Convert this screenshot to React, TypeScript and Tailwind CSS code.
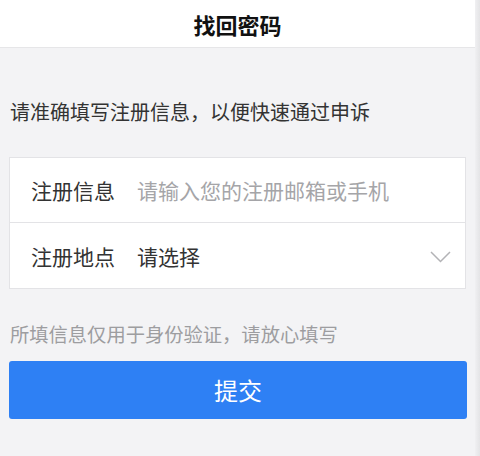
import React from "react";

export default function App() {
  const font = { fontFamily: '"Noto Sans CJK SC", "Noto Sans", sans-serif' };
  return (
    <div className="flex h-[456px] w-[480px] overflow-hidden bg-[#f3f3f5]" style={font}>
      <div className="flex w-[475px] flex-col">
        <div className="flex h-[48px] items-center justify-center border-b border-[#e6e6e8] bg-white">
          <span className="text-[22px] font-bold leading-[28px] text-[#111]">找回密码</span>
        </div>
        <div className="px-[9px]">
          <p className="mt-[50px] pl-[1px] text-[20px] leading-[28px] text-[#333]">
            请准确填写注册信息，以便快速通过申诉
          </p>
          <div className="mt-[31px] border border-[#e3e3e6] bg-white">
            <div className="flex h-[65px] items-center border-b border-[#e3e3e6] pl-[21px]">
              <span className="w-[84px] text-[21px] leading-[28px] text-[#333]">注册信息</span>
              <span className="ml-[22px] text-[21px] leading-[28px] text-[#a5a5a8]">请输入您的注册邮箱或手机</span>
            </div>
            <div className="flex h-[65px] items-center pl-[21px] pr-[14px]">
              <span className="w-[84px] text-[21px] leading-[28px] text-[#333]">注册地点</span>
              <span className="ml-[22px] flex-1 text-[21px] leading-[28px] text-[#333]">请选择</span>
              <svg width="21" height="12" viewBox="0 0 21 12" className="mt-[3px]">
                <path d="M1 1 L10.5 10.5 L20 1" fill="none" stroke="#b3b3b6" strokeWidth="1.5" />
              </svg>
            </div>
          </div>
          <p className="mt-[32px] pl-[1px] text-[19.3px] leading-[26px] text-[#9d9da0]">
            所填信息仅用于身份验证，请放心填写
          </p>
          <button className="mt-[14px] flex h-[58px] w-[458px] items-center justify-center rounded-[3px] bg-[#2e80f4] text-[24px] leading-[30px] text-white">
            提交
          </button>
        </div>
      </div>
      <div className="h-full w-[5px] bg-gradient-to-r from-[#f0f0f2] to-[#e4e4e6]" />
    </div>
  );
}
